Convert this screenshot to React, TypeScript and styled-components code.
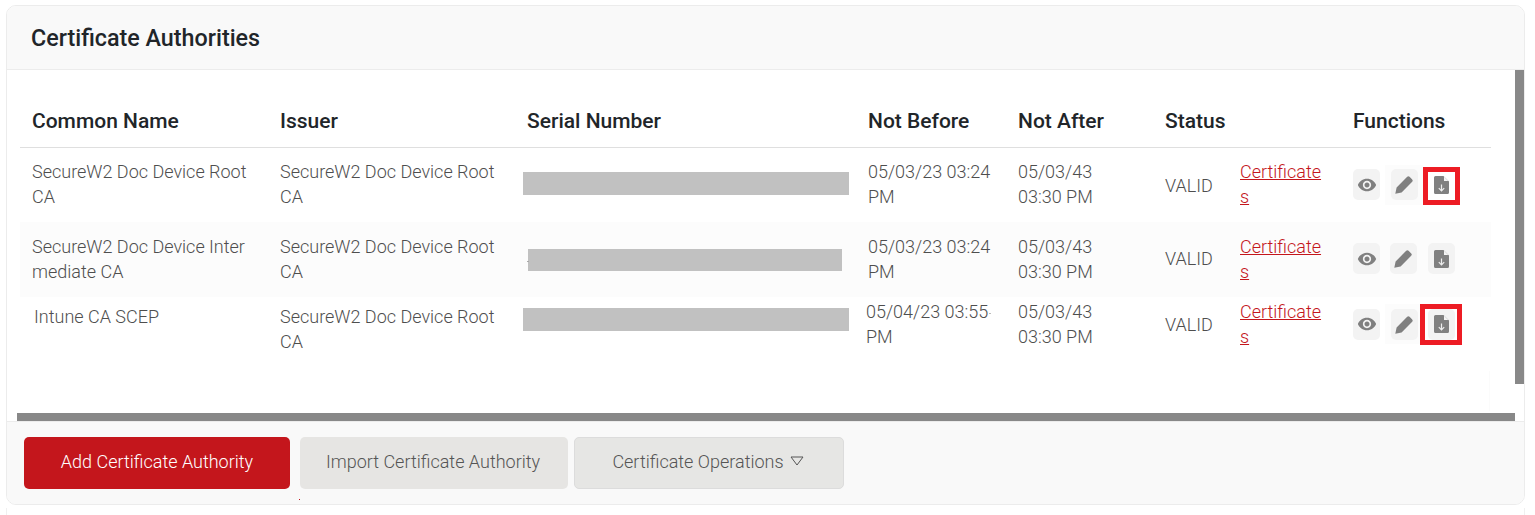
import React from "react";
import styled, { createGlobalStyle } from "styled-components";
import { MdRemoveRedEye } from "react-icons/md";

const Global = createGlobalStyle`
  html, body { margin: 0; padding: 0; background: #fff; }
  body { font-family: Roboto, "Liberation Sans", sans-serif; }
`;

const COLUMNS = "248px 247px 341px 150px 147px 75px 113px 150px";

const Page = styled.div`
  width: 1535px;
  height: 515px;
  padding: 5px 0 0 6px;
  box-sizing: border-box;
  overflow: hidden;
`;
const Card = styled.section`
  position: relative;
  width: 1519px;
  height: 500px;
  box-sizing: border-box;
  border: 1px solid #ececec;
  border-radius: 10px;
  display: flex;
  flex-direction: column;
  overflow: hidden;
`;
const CardHeader = styled.header`
  height: 64px;
  flex: none;
  box-sizing: border-box;
  background: #f9f9f9;
  border-bottom: 1px solid #ececec;
  padding-left: 24px;
  display: flex;
  align-items: center;
`;
const Title = styled.h2`
  margin: 0;
  font-size: 23.3px;
  font-weight: 500;
  color: #212529;
`;
const CardBody = styled.div`
  height: 351px;
  flex: none;
  display: grid;
  grid-template-columns: 1fr 9px;
`;
const ScrollArea = styled.div`
  position: relative;
  display: flex;
  flex-direction: column;
  justify-content: space-between;
  padding: 30px 0 0 10px;
  min-width: 0;
`;
const VTrack = styled.div`
  background: #fff;
`;
const VThumb = styled.div`
  height: 314px;
  background: #888;
`;
const HThumb = styled.div`
  height: 8px;
  background: #888;
  flex: none;
`;
const Table = styled.div`
  margin-left: 3px;
  width: 1471px;
`;
const HeadRow = styled.div`
  display: grid;
  grid-template-columns: ${COLUMNS};
  height: 48px;
  box-sizing: border-box;
  border-bottom: 1px solid #dfdfdf;
  padding-bottom: 6px;
  align-items: center;
`;
const HeadCell = styled.div`
  padding-left: 12px;
  font-size: 21px;
  font-weight: 500;
  color: #212529;
  white-space: nowrap;
`;
const Row = styled.div<{ $h: number; $tint?: boolean; $lift?: number }>`
  display: grid;
  grid-template-columns: ${COLUMNS};
  grid-template-rows: ${(p) => p.$h - (p.$lift ?? 0)}px;
  height: ${(p) => p.$h}px;
  box-sizing: border-box;
  padding-bottom: ${(p) => p.$lift ?? 0}px;
  align-items: center;
  background: ${(p) => (p.$tint ? "#fcfcfc" : "transparent")};
`;
const Cell = styled.div<{ $left?: number; $pad?: number; $lift?: number }>`
  padding: ${(p) => p.$pad ?? 0}px 16px ${(p) => p.$lift ?? 0}px ${(p) => p.$left ?? 12}px;
  font-size: 18px;
  font-weight: 300;
  line-height: 25px;
  color: #4e4e4e;
  word-break: break-all;
`;
const DateCell = styled(Cell)`
  word-break: normal;
  padding-right: 3px;
`;
const AfterCell = styled(DateCell)`
  max-width: 105px;
  padding-right: 0;
`;
const StatusCell = styled(Cell)`
  padding-right: 0;
  word-break: normal;
`;
const Redaction = styled.div<{ $left: number; $w: number; $h: number; $up: number }>`
  margin: 0 0 ${(p) => p.$up}px ${(p) => p.$left}px;
  width: ${(p) => p.$w}px;
  height: ${(p) => p.$h}px;
  background: #c1c1c1;
`;
const CertLink = styled.a`
  display: block;
  width: 82px;
  font-size: 18px;
  font-weight: 300;
  line-height: 25px;
  color: #c4161c;
  text-decoration: underline;
  word-break: break-all;
`;
const Functions = styled.div<{ $lift?: number }>`
  position: relative;
  display: flex;
  align-items: center;
  padding: 0 0 ${(p) => p.$lift ?? 0}px 12px;
`;
const IconButton = styled.button<{ $gap?: number; $plain?: boolean }>`
  width: 27px;
  height: 31px;
  flex: none;
  margin-left: ${(p) => p.$gap ?? 0}px;
  padding: 0;
  border: 0;
  border-radius: 5px;
  background: ${(p) => (p.$plain ? "#fff" : "#f3f3f3")};
  color: #808080;
  display: flex;
  align-items: center;
  justify-content: center;
`;
const PencilPatch = styled.div`
  background: #fcfcfc;
  margin-left: 5px;
  width: 38px;
  height: 40px;
  display: flex;
  align-items: center;
  padding-left: 6px;
  box-sizing: border-box;
`;
const Highlight = styled.div<{ $x: number; $y: number; $w: number; $h: number }>`
  position: absolute;
  left: ${(p) => p.$x}px;
  top: ${(p) => p.$y}px;
  width: ${(p) => p.$w}px;
  height: ${(p) => p.$h}px;
  box-sizing: border-box;
  border: 5px solid #ed1c24;
  pointer-events: none;
`;
const Footer = styled.footer`
  flex: 1;
  background: #f9f9f9;
  border-top: 1px solid #ececec;
  padding: 15px 0 0 17px;
  display: flex;
  align-items: flex-start;
`;
const Button = styled.button<{ $w: number; $gap: number; $kind: "primary" | "muted" | "menu" }>`
  width: ${(p) => p.$w}px;
  height: 52px;
  margin-left: ${(p) => p.$gap}px;
  padding: 0 ${(p) => (p.$kind === "primary" ? 0 : 2)}px 4px 0;
  box-sizing: border-box;
  border-radius: 5px;
  border: ${(p) => (p.$kind === "menu" ? "1px solid #dcdcdc" : "0")};
  background: ${(p) => (p.$kind === "primary" ? "#c4161c" : p.$kind === "menu" ? "#e6e6e4" : "#e6e5e3")};
  color: ${(p) => (p.$kind === "primary" ? "#fff" : "#555")};
  font-family: Roboto, "Liberation Sans", sans-serif;
  font-size: 18px;
  font-weight: 300;
  display: flex;
  align-items: center;
  justify-content: center;
  gap: 6px;
`;
const Speck = styled.span<{ $x: number; $y: number; $w: number; $h: number; $c: string }>`
  position: absolute;
  left: ${(p) => p.$x}px;
  top: ${(p) => p.$y}px;
  width: ${(p) => p.$w}px;
  height: ${(p) => p.$h}px;
  background: ${(p) => p.$c};
`;
const NextCard = styled.div`
  width: 1519px;
  height: 8px;
  margin-top: 3px;
  box-sizing: border-box;
  border-left: 1px solid #f0f0f0;
  border-right: 1px solid #f0f0f0;
`;

const PencilIcon = () => (
  <svg width="19" height="19" viewBox="0 0 19 19" aria-hidden="true">
    <path d="M0.3 18.7L1.6 12.4L12.2 1.8Q13.4 .6 14.6 1.8L17.2 4.4Q18.4 5.6 17.2 6.8L6.6 17.4Z" fill="#808080" />
  </svg>
);

const DocIcon = () => (
  <svg width="15" height="18" viewBox="0 0 15 18" aria-hidden="true">
    <path d="M1.5 0H9.5L15 5.5V16.5A1.5 1.5 0 0 1 13.5 18H1.5A1.5 1.5 0 0 1 0 16.5V1.5A1.5 1.5 0 0 1 1.5 0Z" fill="#808080" />
    <path d="M10 .6V5H14.4Z" fill="#f4f4f4" />
    <path d="M7.5 8.5V14.8M4.8 12.2L7.5 15L10.2 12.2" fill="none" stroke="#eee" strokeWidth="1.2" />
  </svg>
);

type RowData = {
  h: number;
  tint?: boolean;
  rowLift?: number;
  textLift?: number;
  iconLift?: number;
  name: string;
  nameLeft?: number;
  namePad?: number;
  issuerPad?: number;
  red: { left: number; w: number; h: number; up: number };
  before: string;
  beforeLeft?: number;
  patch: boolean;
  plainDoc?: boolean;
};

const rows: RowData[] = [
  { h: 74, textLift: 2, iconLift: 1, name: "SecureW2 Doc Device Root CA", red: { left: 8, w: 326, h: 23, up: 4 }, before: "05/03/23 03:24 PM", patch: true, plainDoc: true },
  { h: 75, tint: true, rowLift: 2, name: "SecureW2 Doc Device Intermediate CA", red: { left: 13, w: 314, h: 22, up: -2 }, before: "05/03/23 03:24 PM", patch: false },
  { h: 54, name: "Intune CA SCEP", nameLeft: 14, namePad: 10, issuerPad: 10, red: { left: 8, w: 326, h: 23, up: 10 }, before: "05/04/23 03:55 PM", beforeLeft: 10, patch: true },
];

export default function App() {
  return (
    <Page>
      <Global />
      <Card>
        <CardHeader>
          <Title>Certificate Authorities</Title>
        </CardHeader>
        <CardBody>
          <ScrollArea>
            <Table>
              <HeadRow>
                <HeadCell>Common Name</HeadCell>
                <HeadCell>Issuer</HeadCell>
                <HeadCell>Serial Number</HeadCell>
                <HeadCell>Not Before</HeadCell>
                <HeadCell>Not After</HeadCell>
                <HeadCell>Status</HeadCell>
                <HeadCell />
                <HeadCell>Functions</HeadCell>
              </HeadRow>
              {rows.map((r, i) => (
                <Row key={i} $h={r.h} $tint={r.tint} $lift={r.rowLift}>
                  <Cell $left={r.nameLeft} $pad={r.namePad} $lift={r.namePad ? 25 : r.textLift}>{r.name}</Cell>
                  <Cell $pad={r.issuerPad} $lift={r.textLift}>SecureW2 Doc Device Root CA</Cell>
                  <Redaction $left={r.red.left} $w={r.red.w} $h={r.red.h} $up={r.red.up} />
                  <DateCell $left={r.beforeLeft} $lift={r.textLift}>{r.before}</DateCell>
                  <AfterCell $lift={r.textLift}>05/03/43 03:30 PM</AfterCell>
                  <StatusCell>VALID</StatusCell>
                  <Cell $lift={r.textLift}><CertLink>Certificates</CertLink></Cell>
                  <Functions $lift={r.iconLift}>
                    <IconButton><MdRemoveRedEye size={20} /></IconButton>
                    {r.patch ? (
                      <PencilPatch>
                        <IconButton><PencilIcon /></IconButton>
                      </PencilPatch>
                    ) : (
                      <IconButton $gap={10}><PencilIcon /></IconButton>
                    )}
                    <IconButton $gap={r.patch ? 5 : 11} $plain={r.plainDoc}><DocIcon /></IconButton>
                  </Functions>
                </Row>
              ))}
            </Table>
            <HThumb />
          </ScrollArea>
          <VTrack><VThumb /></VTrack>
        </CardBody>
        <Footer>
          <Button $w={266} $gap={0} $kind="primary">Add Certificate Authority</Button>
          <Button $w={268} $gap={10} $kind="muted">Import Certificate Authority</Button>
          <Button $w={270} $gap={6} $kind="menu">
            Certificate Operations
            <svg width="14" height="10" viewBox="0 0 14 10" aria-hidden="true">
              <path d="M1 1H13L7 9Z" fill="none" stroke="#555" strokeWidth="1" />
            </svg>
          </Button>
        </Footer>
        <Speck $x={292} $y={493} $w={1} $h={1} $c="#c4161c" />
        <Speck $x={520} $y={255} $w={2} $h={1} $c="#aaa" />
        <Speck $x={982} $y={307} $w={2} $h={1} $c="#bbb" />
        <Speck $x={1482} $y={365} $w={1} $h={40} $c="#fbfbfb" />
        <Highlight $x={1416} $y={161} $w={37} $h={38} />
        <Highlight $x={1413} $y={298} $w={42} $h={41} />
      </Card>
      <NextCard />
    </Page>
  );
}
